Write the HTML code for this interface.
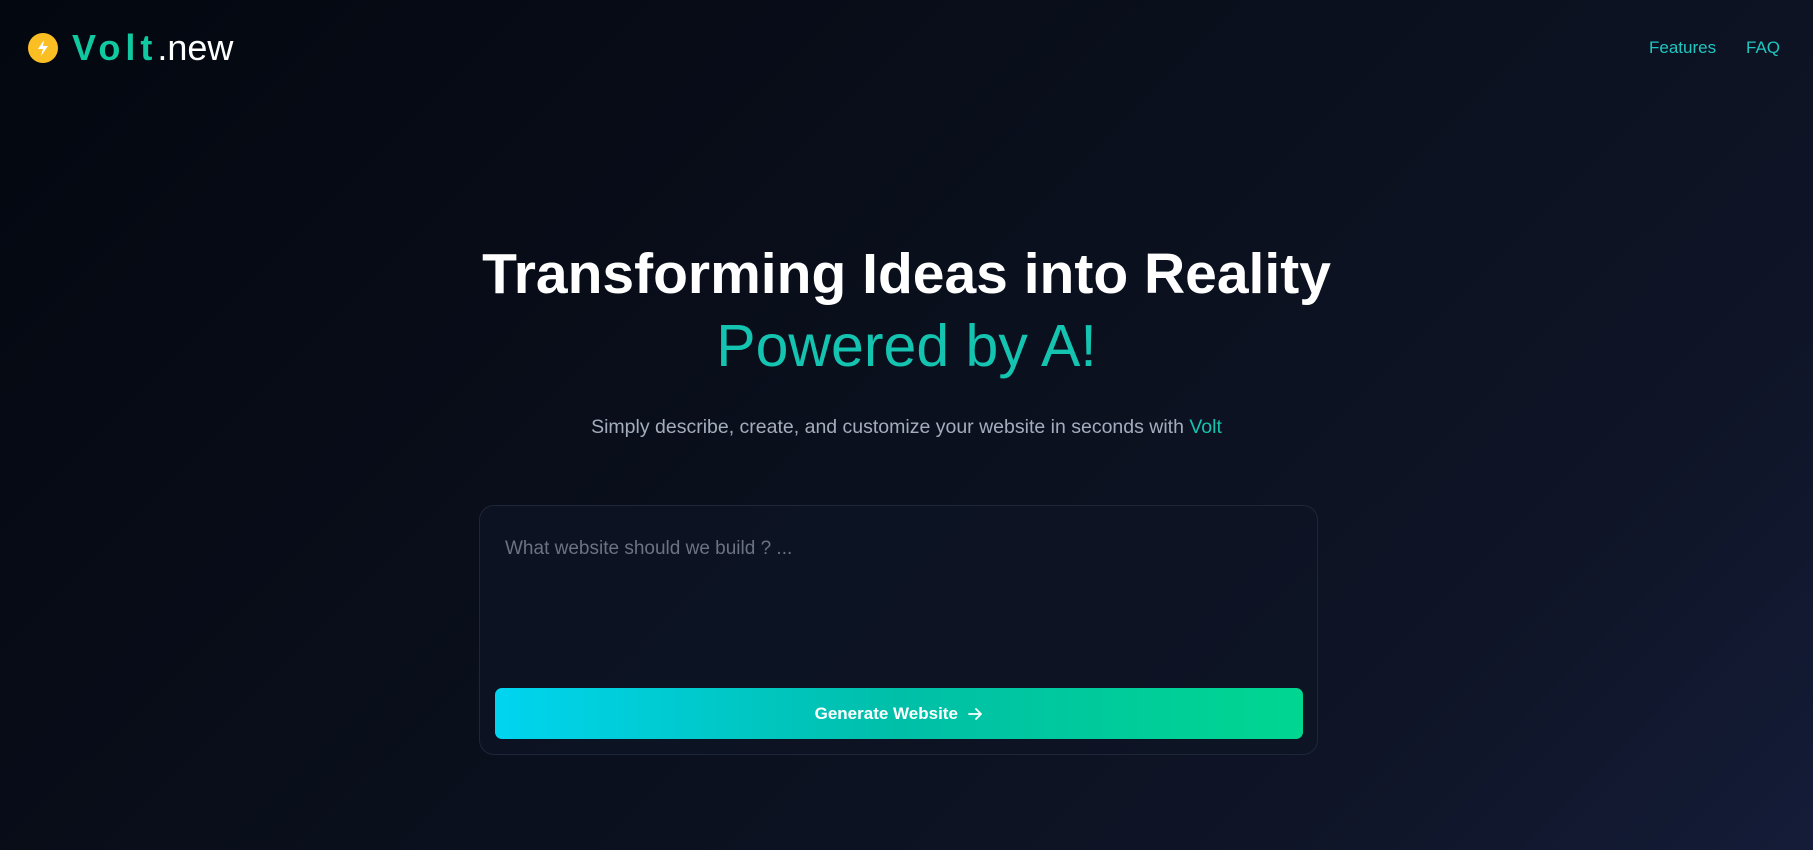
<!DOCTYPE html>
<html><head><meta charset="utf-8"><style>
*{margin:0;padding:0;box-sizing:border-box}
html,body{width:1813px;height:850px;overflow:hidden}
body{font-family:"Liberation Sans",sans-serif;background:linear-gradient(135deg,#03070f 0%,#0a0f1c 45%,#0f1527 80%,#141c38 100%);position:relative;color:#fff}
.logo{position:absolute;left:28px;top:30px;display:flex;align-items:center}
.circ{width:30px;height:30px;border-radius:50%;background:#fbbf24;display:flex;align-items:center;justify-content:center}
.brand{margin-left:14px;font-size:36px;line-height:1}
.brand b{color:#10c9a0;font-weight:700;letter-spacing:5px}
.nav{position:absolute;top:38px;font-size:17px;color:#1fc7c0}
h1{position:absolute;left:0;width:100%;text-align:center;font-weight:700;font-size:57px;line-height:72px;top:238px}
h1 span{color:#14c3b0;font-weight:400;font-size:59px}
.sub{position:absolute;top:416px;width:100%;text-align:center;font-size:19.5px;color:#a3adbd}
.sub b{color:#14c3b0;font-weight:400}
.box{position:absolute;left:479px;top:505px;width:839px;height:250px;border:1px solid #1e2637;border-radius:15px;background:rgba(14,20,36,.75)}
.ph{position:absolute;left:25px;top:32px;font-size:19px;color:#6b7280}
.btn{position:absolute;left:15px;top:182px;width:808px;height:51px;border-radius:7px;background:linear-gradient(90deg,#00d4f0,#00bfa8 50%,#00d690);display:flex;align-items:center;justify-content:center;font-weight:700;font-size:17px;color:#fff}
</style></head><body>
<div class="logo"><div class="circ"><svg width="16" height="18" viewBox="0 0 16 18"><path d="M9 1 L3 10 H8 L6 17 L13 7 H8 Z" fill="#fff"/></svg></div><div class="brand"><b>Volt</b>.new</div></div>
<div class="nav" style="left:1649px">Features</div>
<div class="nav" style="left:1746px">FAQ</div>
<h1>Transforming Ideas into Reality<br><span>Powered by A!</span></h1>
<div class="sub">Simply describe, create, and customize your website in seconds with <b>Volt</b></div>
<div class="box"><div class="ph">What website should we build ? ...</div>
<div class="btn">Generate Website&nbsp;&nbsp;<svg width="16" height="16" viewBox="0 0 16 16" fill="none" stroke="#fff" stroke-width="1.8" stroke-linecap="round" stroke-linejoin="round"><path d="M2 8H14M9 3L14 8L9 13"/></svg></div></div>
</body></html>
